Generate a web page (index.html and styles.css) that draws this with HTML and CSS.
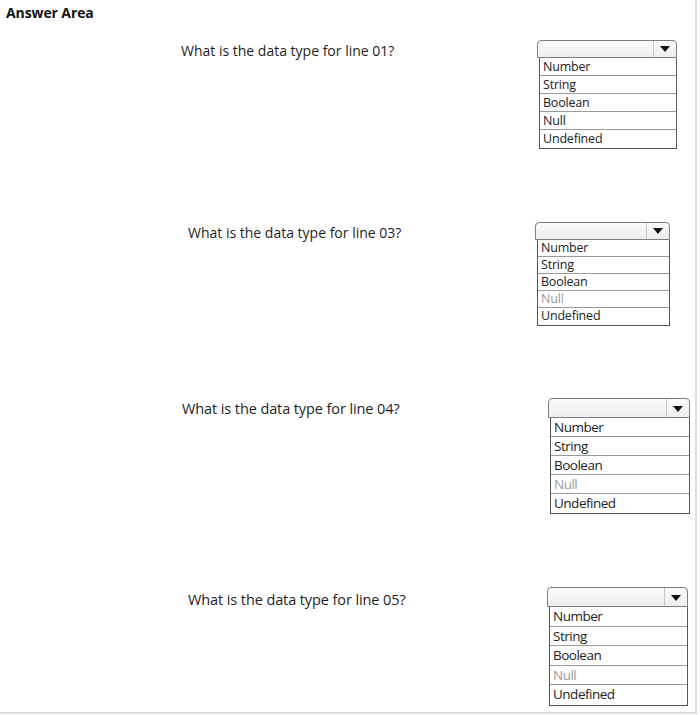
FILE: index.html
```html
<!DOCTYPE html>
<html lang="en">
<head>
    <meta charset="UTF-8">
    <meta name="viewport" content="width=device-width, initial-scale=1.0">
    <title>Answer Area</title>
    <link rel="stylesheet" href="styles.css">
</head>
<body>
    <div class="answer-area">
        <h1>Answer Area</h1>

        <!-- one row per question: text on the left, open dropdown on the right -->
        <div class="item item-1">
            <p class="question">What is the data type for line 01?</p>
            <div class="dropdown">
                <div class="select"><span class="arrow"></span></div>
                <ul class="options">
                    <li>Number</li>
                    <li>String</li>
                    <li>Boolean</li>
                    <li>Null</li>
                    <li>Undefined</li>
                </ul>
            </div>
        </div>

        <div class="item item-2">
            <p class="question">What is the data type for line 03?</p>
            <div class="dropdown">
                <div class="select"><span class="arrow"></span></div>
                <ul class="options">
                    <li>Number</li>
                    <li>String</li>
                    <li>Boolean</li>
                    <li class="faded">Null</li>
                    <li>Undefined</li>
                </ul>
            </div>
        </div>

        <div class="item item-3">
            <p class="question">What is the data type for line 04?</p>
            <div class="dropdown">
                <div class="select"><span class="arrow"></span></div>
                <ul class="options">
                    <li>Number</li>
                    <li>String</li>
                    <li>Boolean</li>
                    <li class="faded">Null</li>
                    <li>Undefined</li>
                </ul>
            </div>
        </div>

        <div class="item item-4">
            <p class="question">What is the data type for line 05?</p>
            <div class="dropdown">
                <div class="select"><span class="arrow"></span></div>
                <ul class="options">
                    <li>Number</li>
                    <li>String</li>
                    <li>Boolean</li>
                    <li class="faded">Null</li>
                    <li>Undefined</li>
                </ul>
            </div>
        </div>
    </div>
</body>
</html>
```

FILE: styles.css
```css
body {
    margin: 0;
    background: #fff;
    font-family: "Open Sans", Arial, sans-serif;
    color: #222;
}
.answer-area {
    width: 695px;
    height: 712px;
    border-right: 2px solid #dedede;
    border-bottom: 2px solid #dedede;
    box-sizing: content-box;
}
h1 {
    margin: 0;
    padding: 3px 0 0 6px;
    height: 36px;
    box-sizing: border-box;
    font-size: 14px;
    font-weight: bold;
    color: #111;
    letter-spacing: -0.1px;
}
.item {
    display: flex;
    align-items: flex-start;
}
.question {
    margin: 0;
    padding-top: 1px;
    font-size: 14px;
    color: #1e1e1e;
    white-space: nowrap;
}
.dropdown {
    margin-left: auto;
}
.select {
    height: 18px;
    border: 1px solid #7e7e7e;
    border-radius: 4px 4px 0 0;
    background: linear-gradient(#fafafa, #eeeeee);
    display: flex;
    justify-content: flex-end;
    box-sizing: border-box;
}
.arrow {
    width: 22px;
    border-left: 1px solid #c8c8c8;
    position: relative;
}
.arrow::after {
    content: "";
    position: absolute;
    left: 6px;
    top: 5px;
    border-left: 5px solid transparent;
    border-right: 5px solid transparent;
    border-top: 6px solid #111;
}
.options {
    list-style: none;
    margin: 0 0 0 2px;
    padding: 0;
    border: 1px solid #555;
    border-top: none;
}
.options li {
    height: 18px;
    line-height: 17px;
    padding-left: 3px;
    font-size: 12.5px;
    border-bottom: 1px solid #9a9a9a;
    box-sizing: border-box;
    letter-spacing: -0.2px;
}
.options li:last-child {
    border-bottom: none;
}
.options li.faded {
    color: #9a9a9a;
}

/* rows sit at slightly different offsets */
.item-1 {
    margin-top: 4px;
}
.item-1 .question {
    margin-left: 181px;
    padding-top: 1px;
}
.item-1 .dropdown {
    width: 140px;
    margin-right: 18px;
}

.item-2 {
    margin-top: 73px;
}
.item-2 .question {
    margin-left: 188px;
    padding-top: 1px;
}
.item-2 .dropdown {
    width: 135px;
    margin-right: 25px;
}
.item-2 .options li {
    height: 17px;
    line-height: 16px;
}

.item-3 {
    margin-top: 72px;
}
.item-3 .question,
.item-4 .question {
    font-size: 14.5px;
    letter-spacing: -0.1px;
}
.item-3 .question {
    margin-left: 182px;
    padding-top: 1px;
}
.item-3 .dropdown {
    width: 142px;
    margin-right: 5px;
}
.item-3 .select,
.item-4 .select {
    height: 20px;
}
.item-3 .arrow::after,
.item-4 .arrow::after {
    top: 7px;
}
.item-3 .options li,
.item-4 .options li {
    height: 19px;
    line-height: 18px;
    font-size: 13.5px;
    letter-spacing: -0.5px;
}

.item-4 {
    margin-top: 73px;
}
.item-4 .question {
    margin-left: 188px;
    padding-top: 3px;
}
.item-4 .dropdown {
    width: 141px;
    margin-right: 7px;
}
.item-4 .options li {
    height: 19.6px;
    line-height: 19px;
}
```
